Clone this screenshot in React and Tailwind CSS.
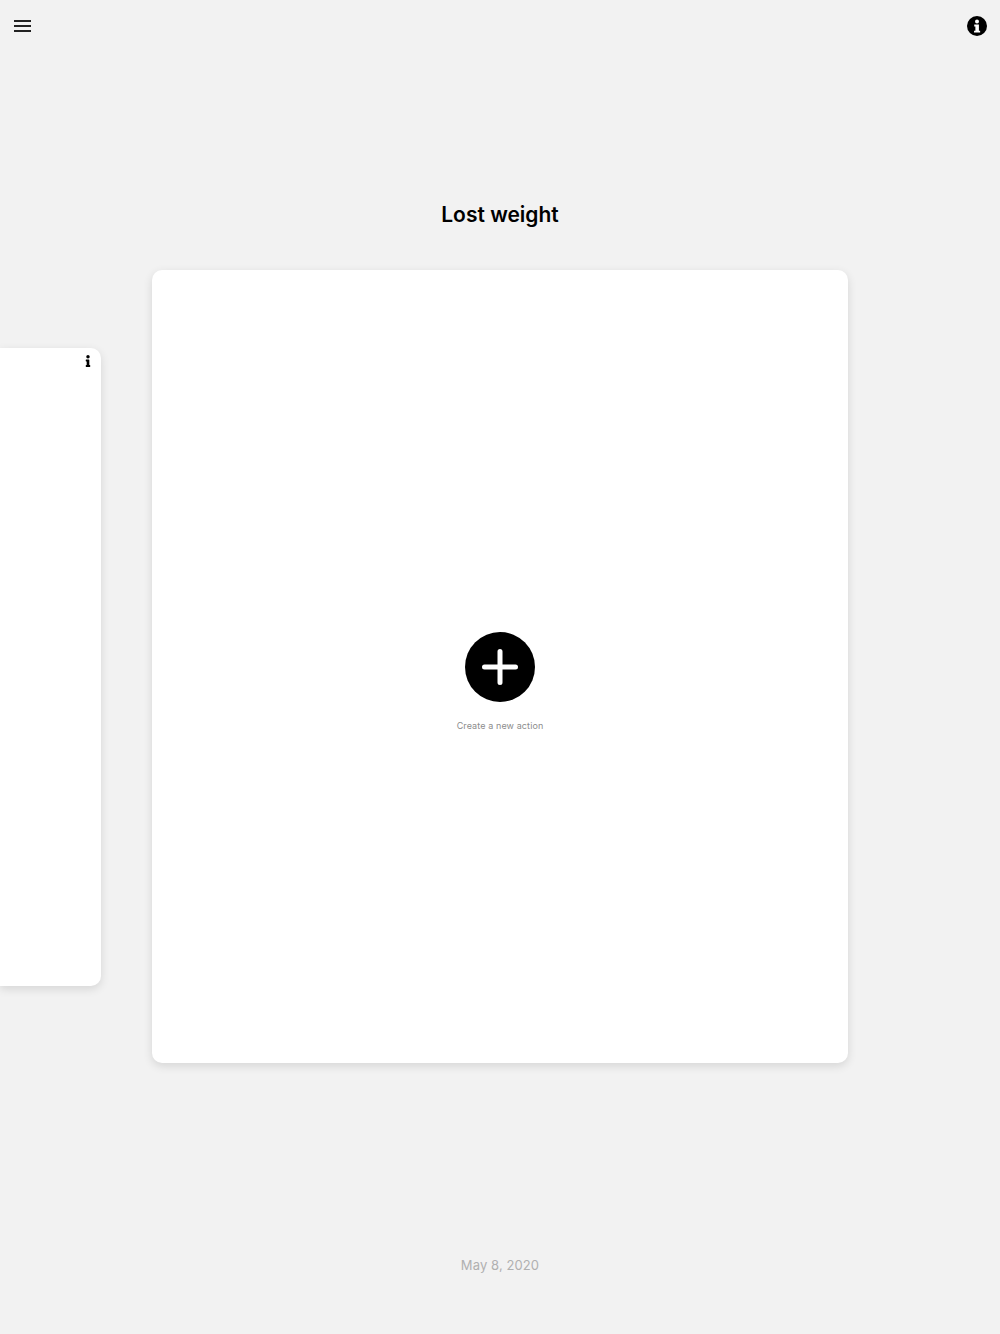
import React from "react";
import { FaInfo } from "react-icons/fa";

export default function App() {
  return (
    <div className="w-[1000px] h-[1334px] bg-[#f2f2f2] flex flex-col overflow-hidden font-['Inter',sans-serif]">
      <header className="flex items-center justify-between pl-[14px] pr-[13px] h-[52px] shrink-0">
        <div className="w-[17px] flex flex-col gap-[3px]">
          <span className="block h-[2px] bg-[#222]" />
          <span className="block h-[2px] bg-[#222]" />
          <span className="block h-[2px] bg-[#222]" />
        </div>
        <svg className="mb-[1px]" width="20" height="20" viewBox="0 0 21 21">
          <circle cx="10.5" cy="10.5" r="10.5" fill="black" />
          <circle cx="10.5" cy="5.8" r="2.1" fill="white" />
          <path d="M7.6 9h4.9v6.4h1.3v2H7.4v-2h1.4v-4.4H7.6z" fill="white" />
        </svg>
      </header>
      <h1 className="mt-[149px] h-[28px] text-center text-[21px] leading-[28px] font-semibold text-black">Lost weight</h1>
      <div className="mt-[41px] flex items-start h-[793px]">
        <div className="mt-[78px] w-[101px] h-[638px] bg-white rounded-r-[10px] shadow-[0_3px_10px_rgba(0,0,0,0.12)] flex justify-end pt-[7px] pr-[10px]">
          <FaInfo className="w-[6px] h-[12px] text-black" />
        </div>
        <div className="ml-[51px] w-[696px] h-[793px] bg-white rounded-[10px] shadow-[0_3px_10px_rgba(0,0,0,0.12)] flex flex-col items-center justify-center pt-[32px]">
          <div className="w-[70px] h-[70px] rounded-full bg-black flex items-center justify-center">
            <svg width="36" height="36" viewBox="0 0 36 36" fill="none" stroke="white" strokeWidth="5" strokeLinecap="round">
              <path d="M18 2.5v31M2.5 18h31" />
            </svg>
          </div>
          <p className="mt-[17px] text-[9px] leading-[14px] tracking-[0.1px] text-[#8c8c8c]">Create a new action</p>
        </div>
      </div>
      <p className="mt-[192px] text-center text-[13px] leading-[20px] tracking-[0.1px] text-[#b0b0b0]">May 8, 2020</p>
    </div>
  );
}
